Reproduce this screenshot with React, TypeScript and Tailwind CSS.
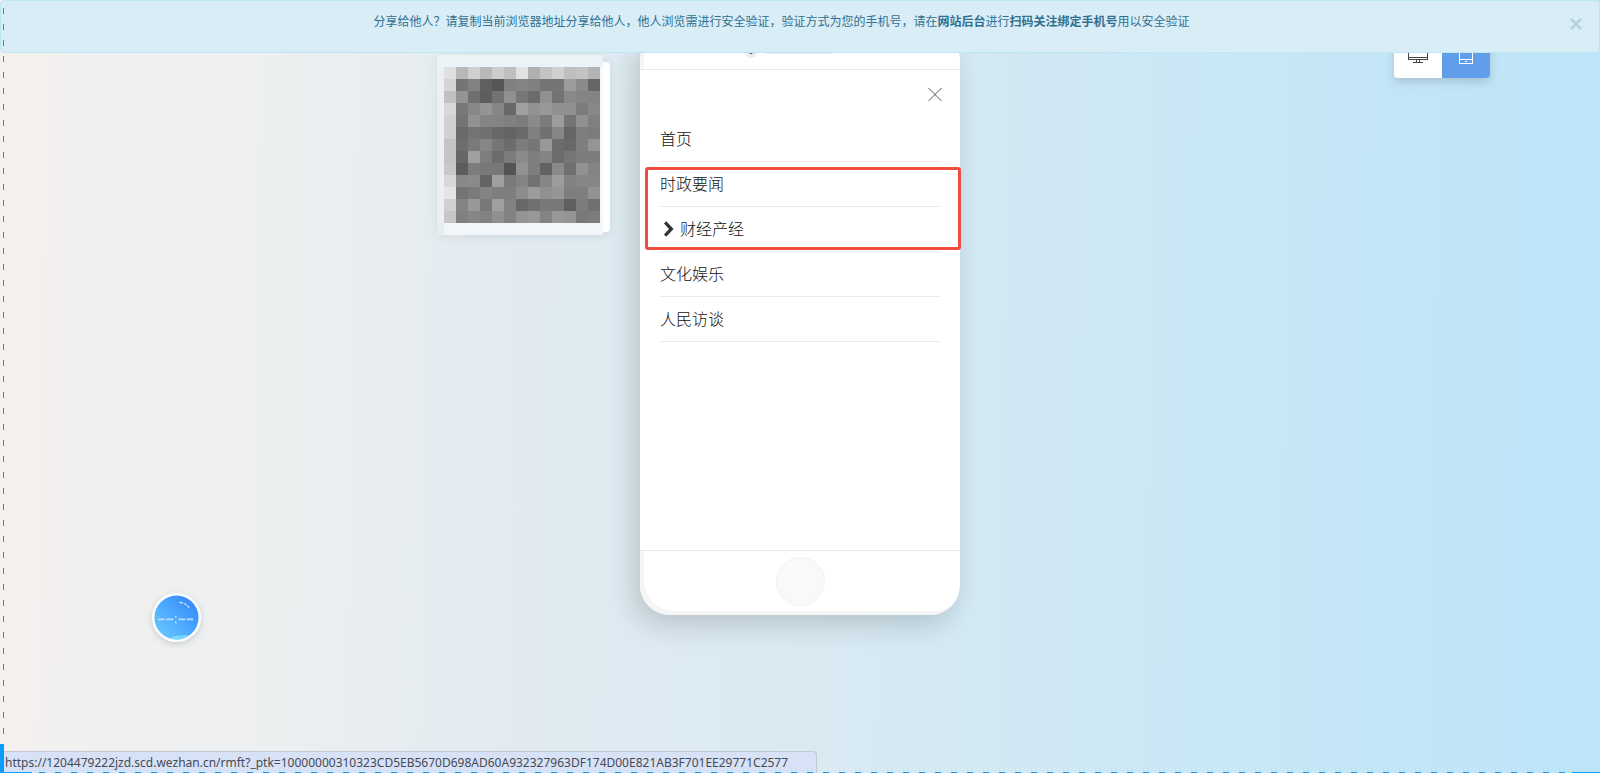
import { useState } from 'react';

const QR_CELLS = [
    'e0 b8 d0 b8 cc bf e2 b0 c4 d0 bf c4 b4',
    'd4 75 82 60 56 80 84 80 75 75 9b 8a 66',
    'c0 94 70 5e 72 90 76 6c 90 72 88 84 84',
    'd8 78 88 94 86 68 a0 92 98 90 90 7c 88',
    'd0 74 92 84 84 80 7c 8a 7c 9c 74 90 80',
    'd0 6a 74 70 68 64 6a 80 70 86 66 7e 7c',
    'c4 6e 7a 86 76 6c 7c 76 98 6c 68 7e 94',
    'c4 66 a0 7e 6c 7c 8a 7e 84 6c 76 7c 7c',
    'c8 5c 7c 78 78 54 92 7e 62 8a 70 92 84',
    'd8 88 8a 64 a0 7a 84 72 86 9c 82 86 86',
    'e4 74 7a 84 7e 7e 8c 9c 90 96 7e 7e 92',
    'd0 84 98 78 a0 82 68 70 78 78 60 7c 70',
    'c6 80 86 82 90 82 94 98 84 98 94 78 7c',
].map((row) => row.split(' '));

const MENU = [
    { name: '首页', sub: false },
    { name: '时政要闻', sub: false },
    { name: '财经产经', sub: true },
    { name: '文化娱乐', sub: false },
    { name: '人民访谈', sub: false },
];

const PREVIEW_URL =
    'https://1204479222jzd.scd.wezhan.cn/rmft?_ptk=10000000310323CD5EB5670D698AD60A932327963DF174D00E821AB3F701EE29771C2577';

function ShareAlert({ onClose }: { onClose: () => void }) {
    return (
        <div
            role="alert"
            className="absolute inset-x-0 top-0 z-20 flex h-[53px] items-start rounded border border-[#bce8f1] bg-[#d9edf7] pl-[15px] pr-4 pt-3 text-xs text-[#31708f]"
        >
            <p className="flex-1 text-center leading-[18px]">
                分享给他人？请复制当前浏览器地址分享给他人，他人浏览需进行安全验证，验证方式为您的手机号，请在<b>网站后台</b>进行<b>扫码关注绑定手机号</b>用以安全验证
            </p>
            <button
                type="button"
                aria-label="关闭"
                onClick={onClose}
                className="ml-[22px] font-['Liberation_Sans',sans-serif] text-2xl font-bold leading-[22px] text-[#31708f] opacity-20"
            >
                ×
            </button>
        </div>
    );
}

function QrCard() {
    return (
        <svg width="173" height="180" viewBox="0 0 173 180" shapeRendering="crispEdges" className="drop-shadow-[0_2px_4px_rgba(0,0,0,0.07)]">
            <rect x="3" y="7" width="170" height="170" rx="4" fill="#fff" shapeRendering="auto" />
            <rect x="0" y="0" width="166" height="12" fill="#ecf3f7" />
            <rect x="0" y="12" width="7" height="156" fill="#e9f1f4" />
            <rect x="0" y="168" width="7" height="12" fill="#e6edf1" />
            <rect x="7" y="168" width="159" height="12" fill="#f3f6f8" />
            <rect x="163" y="12" width="3" height="156" fill="#f4f8fa" />
            {QR_CELLS.map((row, y) =>
                row.map((c, x) => (
                    <rect key={`${x}-${y}`} x={7 + x * 12} y={12 + y * 12} width="12" height="12" fill={`#${c}${c}${c}`} />
                ))
            )}
        </svg>
    );
}

function Phone() {
    return (
        <section className="rounded-[30px] bg-white shadow-[-6px_10px_28px_rgba(0,0,0,0.17),inset_4px_-4px_0_#f5f5f5]">
            <header className="flex h-10 items-start border-b border-[#e8e8ea] pl-[105px] pt-4">
                <span className="flex size-3 items-center justify-center rounded-full bg-[#ececec]">
                    <span className="size-1 rounded-full bg-[#404040]"></span>
                </span>
                <span className="ml-2 mt-1 h-1 w-[68px] rounded-full bg-[#ececec]"></span>
            </header>
            <div className="h-[480px] bg-white px-5">
                <div className="flex h-[47px] items-start justify-end pt-[15px]">
                    <button type="button" aria-label="关闭菜单" className="-mr-1 text-[#555]">
                        <svg width="18" height="18" viewBox="0 0 18 18" fill="none" stroke="currentColor">
                            <path d="M2.500 3L15.500 16M15.500 3L2.500 16" />
                        </svg>
                    </button>
                </div>
                <nav className="relative text-base font-light text-[#111]">
                    {MENU.map((item) => (
                        <a key={item.name} href="#" className="flex h-[45px] items-center border-b border-[#ebebeb]">
                            {item.sub && (
                                <svg width="20" height="18" viewBox="0 0 20 18" fill="#333">
                                    <path d="M4 3.400L6.200 1.200L13.600 9L6.200 16.800L4 14.600L9 9Z" />
                                </svg>
                            )}
                            {item.name}
                        </a>
                    ))}
                    <div className="pointer-events-none absolute -left-[15px] -right-[21px] top-[50px] h-[83px] rounded-[3px] border-3 border-[#ef4b3f]"></div>
                </nav>
            </div>
            <footer className="flex h-[65px] justify-center border-t border-[#e8e8ee] pt-[6px]">
                <button type="button" aria-label="Home" className="size-[49px] rounded-full border border-[#f2f2f2] bg-[#f9f9f9]"></button>
            </footer>
        </section>
    );
}

function DeviceSwitch() {
    return (
        <div className="flex h-12 overflow-hidden rounded-[4px] shadow-[0_4px_10px_rgba(0,0,0,0.15)]">
            <button type="button" aria-label="电脑" className="flex w-12 items-center justify-center bg-white text-[#444]">
                <svg width="20" height="20" viewBox="0 0 20 20" fill="none" stroke="currentColor" shapeRendering="crispEdges">
                    <path d="M0.5 3.5H19.5V15.5H0.5ZM0.5 13.5H19.5M8.5 15.5V18.5M11.5 15.5V18.5M5 18.5H15" />
                </svg>
            </button>
            <button type="button" aria-label="手机" className="flex w-12 items-center justify-center bg-[#609eea] text-white">
                <svg width="20" height="20" viewBox="0 0 20 20" fill="none" stroke="currentColor" shapeRendering="crispEdges">
                    <path d="M3.5 1.5H16.5V19.5H3.5ZM3.5 15.5H16.5M9 17.5H11" />
                </svg>
            </button>
        </div>
    );
}

function TimerBubble() {
    return (
        <button type="button" aria-label="计时" className="absolute bottom-[131px] left-[152px] size-[49px] rounded-full shadow-[0_2px_6px_rgba(0,0,0,0.15)]">
            <svg width="49" height="49" viewBox="0 0 50 50">
                <defs>
                    <linearGradient id="bubble" x1="0" y1="1" x2="1" y2="0">
                        <stop offset="0" stopColor="#70ccff" />
                        <stop offset="0.5" stopColor="#4ba9fd" />
                        <stop offset="1" stopColor="#3080f8" />
                    </linearGradient>
                </defs>
                <circle cx="25" cy="25" r="25" fill="#f9fdff" />
                <circle cx="25" cy="25" r="22.5" fill="url(#bubble)" />
                <path d="M17 46Q27 42 38 43Q32 47.500 25 47.500Q20 47.500 17 46Z" fill="#75d8fc" />
                <path d="M28 9.5Q34 10 38 15" fill="none" stroke="#d5eaff" strokeWidth="1.200" strokeDasharray="4 1 3 1" />
                <path d="M6 27H13M14.500 27H22M27 27H34M35.500 27H42" stroke="#b7dfff" strokeWidth="1.800" />
                <path d="M23.500 24.500H25M23.500 30H25" stroke="#d5eeff" strokeWidth="1.600" />
            </svg>
        </button>
    );
}

export default function App() {
    const [showAlert, setShowAlert] = useState(true);

    return (
        <div className="relative min-h-screen overflow-hidden bg-[linear-gradient(91deg,#f5f1ee_0%,#f1f0f0_6%,#eceff0_19%,#e2ebf1_32%,#d9eaf3_52%,#cde8f5_70%,#c4e6f7_85%,#bde4f8_100%)] font-['Noto_Sans','Noto_Sans_CJK_SC',sans-serif]">
            {showAlert && <ShareAlert onClose={() => setShowAlert(false)} />}

            <main className="grid grid-cols-[1fr_320px_1fr] items-start pt-[30px]">
                <div className="mr-[30px] mt-[25px] justify-self-end">
                    <QrCard />
                </div>
                <Phone />
                <div className="mr-[110px] justify-self-end">
                    <DeviceSwitch />
                </div>
            </main>

            <TimerBubble />

            {/* browser link hint */}
            <div className="absolute bottom-0 left-1 flex h-[22px] min-w-[813px] items-center rounded-tr border-r border-t border-[#c3c9d3] bg-[#d8e2f6] pl-px pr-[6px] font-['Noto_Sans',sans-serif] text-xs text-[#454a54]">
                {PREVIEW_URL}
            </div>

            {/* selection outline */}
            <div className="pointer-events-none absolute bottom-[29px] left-[3px] top-2 z-30 w-px bg-[repeating-linear-gradient(180deg,#1296eb_0_6px,transparent_6px_16px)]"></div>
            <div className="pointer-events-none absolute bottom-0 left-[39px] right-7 z-30 h-px bg-[repeating-linear-gradient(90deg,#0a9dfc_0_6px,transparent_6px_16px)]"></div>
            <div className="pointer-events-none absolute bottom-0 left-0 z-30 h-[29px] w-8 border-b border-l-4 border-[#0a9dfc]"></div>
            <div className="pointer-events-none absolute bottom-0 right-0 z-30 h-px w-7 bg-[#0a9dfc]"></div>
        </div>
    );
}
